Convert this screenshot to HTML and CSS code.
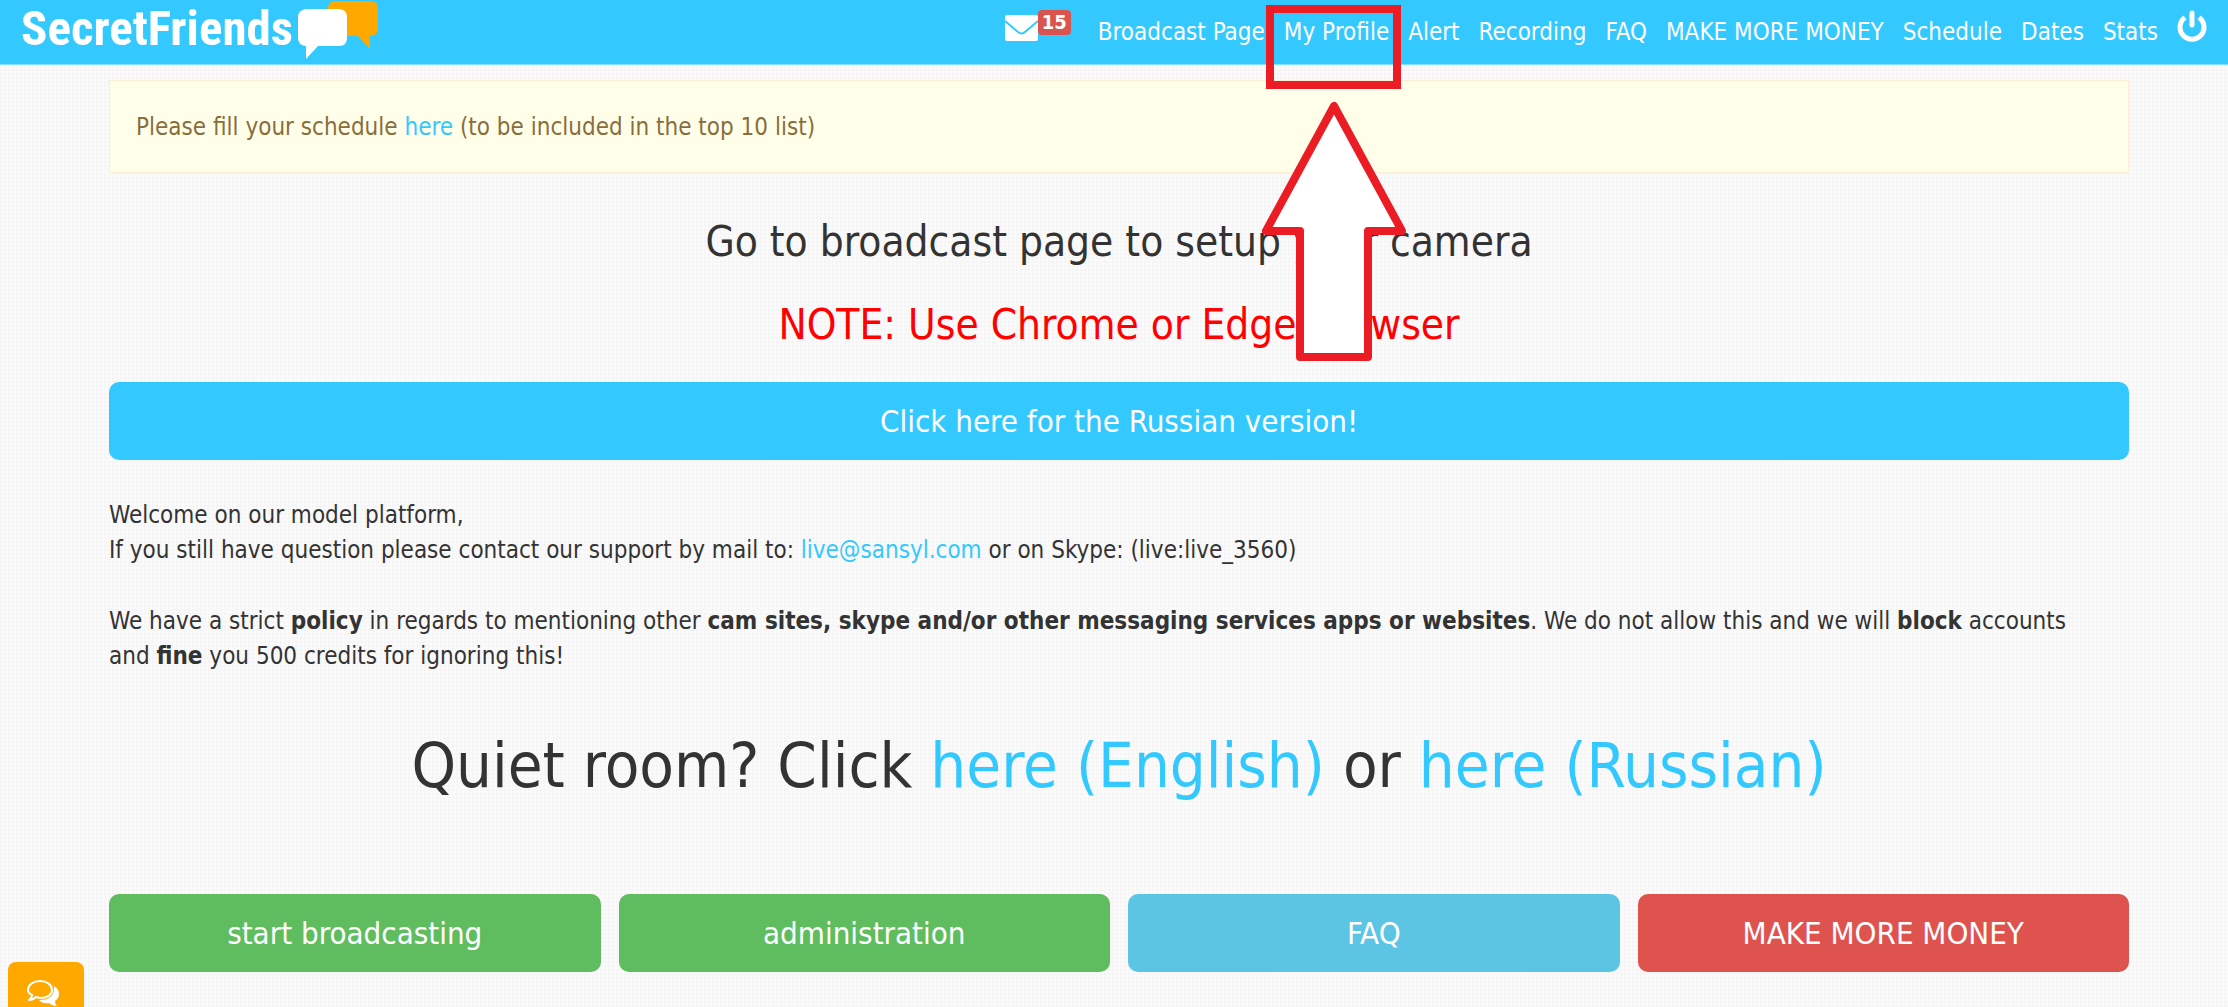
FILE: index.html
```
<!DOCTYPE html>
<html lang="en">
<head>
  <meta charset="UTF-8">
  <meta name="viewport" content="width=device-width, initial-scale=1.0">
  <title>SecretFriends</title>
  <link rel="stylesheet" href="styles.css">
</head>
<body>
  <header class="navbar">
    <a class="brand" href="#">
      <span class="brand-name">SecretFriends</span>
      <svg class="brand-logo" width="80" height="60" viewBox="0 0 80 60" aria-hidden="true">
        <path fill="#ffa800" d="M38 1h34q8 0 8 8v20q0 6-8 7v13L60 36H38q-8 0-8-8V9q0-8 8-8z"/>
        <path fill="#fff" d="M8 9h34q7 1 7 8v21q0 7-7 8H20L8 59V46q-8-1-8-8V17q0-7 8-8z"/>
      </svg>
    </a>
    <nav class="nav">
      <a class="nav-mail" href="#" aria-label="Messages">
        <svg width="33" height="26" viewBox="0 0 33 26" aria-hidden="true">
          <rect width="33" height="26" rx="2" fill="#fff"/>
          <path d="M0 6l13 11q4 3 7 0L33 6" fill="none" stroke="#33c9ff" stroke-width="2"/>
        </svg>
        <span class="badge">15</span>
      </a>
      <a href="#">Broadcast Page</a>
      <a class="marked" href="#">My Profile</a>
      <a href="#">Alert</a>
      <a href="#">Recording</a>
      <a href="#">FAQ</a>
      <a href="#">MAKE MORE MONEY</a>
      <a href="#">Schedule</a>
      <a href="#">Dates</a>
      <a href="#">Stats</a>
      <a class="nav-power" href="#" aria-label="Log out">
        <svg width="30" height="32" viewBox="0 0 30 32" fill="none" stroke="#fff" stroke-width="5" aria-hidden="true">
          <path d="M8 7.500A12 12 0 1 0 22 7.500"/>
          <path d="M15 3v12" stroke-linecap="round"/>
        </svg>
      </a>
    </nav>
  </header>

  <main class="container">
    <div class="alert">Please fill your schedule <a href="#">here</a> (to be included in the top 10 list)</div>

    <h2 class="heading">Go to broadcast page to setup your camera</h2>
    <h2 class="heading note">NOTE: Use Chrome or Edge browser</h2>

    <button class="btn btn-primary" type="button">Click here for the Russian version!</button>

    <div class="welcome">
      <p>Welcome on our model platform,<br>
      If you still have question please contact our support by mail to: <a href="#">live@sansyl.com</a> or on Skype: (live:live_3560)</p>
      <p>We have a strict <b>policy</b> in regards to mentioning other <b>cam sites, skype and/or other messaging services apps or websites</b>. We do not allow this and we will <b>block</b> accounts and <b>fine</b> you 500 credits for ignoring this!</p>
    </div>

    <h1 class="quiet">Quiet room? Click <a href="#">here (English)</a> or <a href="#">here (Russian)</a></h1>

    <div class="btn-row">
      <button class="btn btn-success" type="button">start broadcasting</button>
      <button class="btn btn-success" type="button">administration</button>
      <button class="btn btn-info" type="button">FAQ</button>
      <button class="btn btn-danger" type="button">MAKE MORE MONEY</button>
    </div>
  </main>

  <!-- chat tab -->
  <button class="chat-tab" type="button" aria-label="Chat">
    <svg width="34" height="28" viewBox="0 0 34 28" aria-hidden="true">
      <path fill="#fff" d="M28 7q5 3 5 8 0 4-4 7 0 3 2 5-5 0-8-3-6 1-10-3 16 0 15-14z"/>
      <path fill="none" stroke="#fff" stroke-width="2" stroke-linejoin="round" d="M14 2c7 0 12 4 12 9s-5 8-12 8l-4-1q-3 3-7 3 3-2 3-5-4-2-4-5c0-5 5-9 12-9z"/>
    </svg>
  </button>
</body>
</html>
```
FILE: styles.css
```
:root {
  --blue: #33c9ff;
  --red: #eb1c24;
}
*,
*::before,
*::after {
  box-sizing: border-box;
}
body {
  margin: 0;
  min-height: 100vh;
  font-family: Tahoma, "DejaVu Sans Condensed", "DejaVu Sans", sans-serif;
  font-stretch: condensed;
  font-size: 24px;
  line-height: 35px;
  color: #333;
  background-color: #fbfbfb;
  background-image:
    repeating-linear-gradient(0deg, rgba(0, 0, 0, 0.01) 0 2px, transparent 2px 4px),
    repeating-linear-gradient(90deg, rgba(0, 0, 0, 0.01) 0 2px, transparent 2px 4px);
}
a {
  color: var(--blue);
  text-decoration: none;
}

/* top bar */
.navbar {
  display: flex;
  justify-content: space-between;
  height: 65px;
  padding: 0 21px;
  background: var(--blue);
  border-bottom: 1px solid #7fe0ff;
}
.brand {
  display: flex;
  gap: 5px;
  color: #fff;
}
.brand-name {
  font-family: "Roboto Condensed", Roboto, sans-serif;
  font-size: 49px;
  font-weight: bold;
  line-height: 58px;
}
.nav {
  display: flex;
  gap: 19px;
  line-height: 64px;
  white-space: nowrap;
}
.nav a {
  color: #fff;
}
.nav-mail {
  display: flex;
  align-items: flex-start;
  padding-top: 10px;
  margin-right: 8px;
}
.nav-mail svg {
  margin-top: 5px;
}
.badge {
  padding: 0 4px;
  border-radius: 4px;
  background: #d9534f;
  font-size: 20px;
  font-weight: bold;
  line-height: 25px;
}
.nav-power svg {
  display: block;
  margin-top: 10px;
}

/* red frame and arrow over the profile link */
.marked {
  position: relative;
}
.marked::before {
  content: "";
  position: absolute;
  z-index: 2;
  top: 5px;
  left: -18px;
  right: -12px;
  height: 84px;
  border: 8px solid var(--red);
}
.marked::after {
  content: "";
  position: absolute;
  z-index: 1;
  top: 100px;
  left: calc(50% - 75px);
  width: 144px;
  height: 262px;
  background: url("data:image/svg+xml,%3Csvg xmlns='http://www.w3.org/2000/svg' viewBox='0 0 144 262'%3E%3Cpath d='M72 6L4 131h34v126h68V131h34z' fill='%23fff' stroke='%23eb1c24' stroke-width='8' stroke-linejoin='round'/%3E%3C/svg%3E") no-repeat;
}

/* page content */
.container {
  padding: 15px 99px 30px 109px;
}
.alert {
  margin-bottom: 45px;
  padding: 29px 26px 27px;
  border: 1px solid #fbeed5;
  background: #ffffe9;
  color: #8a6d3b;
}
.heading {
  margin: 36px 0 34px;
  font-size: 42px;
  font-weight: normal;
  line-height: 47px;
  text-align: center;
}
.note {
  color: #f00;
}
.btn {
  width: 100%;
  height: 78px;
  border: 0;
  border-radius: 10px;
  color: #fff;
  font: inherit;
  font-size: 31px;
  cursor: pointer;
}
.btn-primary {
  background: var(--blue);
}
.btn-success {
  background: #5fbd5f;
}
.btn-info {
  background: #5dc5e4;
}
.btn-danger {
  background: #df534f;
}
.welcome {
  margin-top: 38px;
  padding-right: 30px;
}
.welcome p {
  margin: 0 0 36px;
}
.quiet {
  margin: 56px 0 92px;
  font-size: 63px;
  font-weight: normal;
  line-height: 72px;
  text-align: center;
}
.btn-row {
  display: flex;
  gap: 18px;
}
.chat-tab {
  position: fixed;
  left: 8px;
  bottom: 0;
  width: 76px;
  height: 45px;
  padding: 16px 18px 0;
  border: 0;
  border-radius: 8px 8px 0 0;
  background: #ffa800;
  overflow: hidden;
  cursor: pointer;
}
.chat-tab svg {
  display: block;
}
```
